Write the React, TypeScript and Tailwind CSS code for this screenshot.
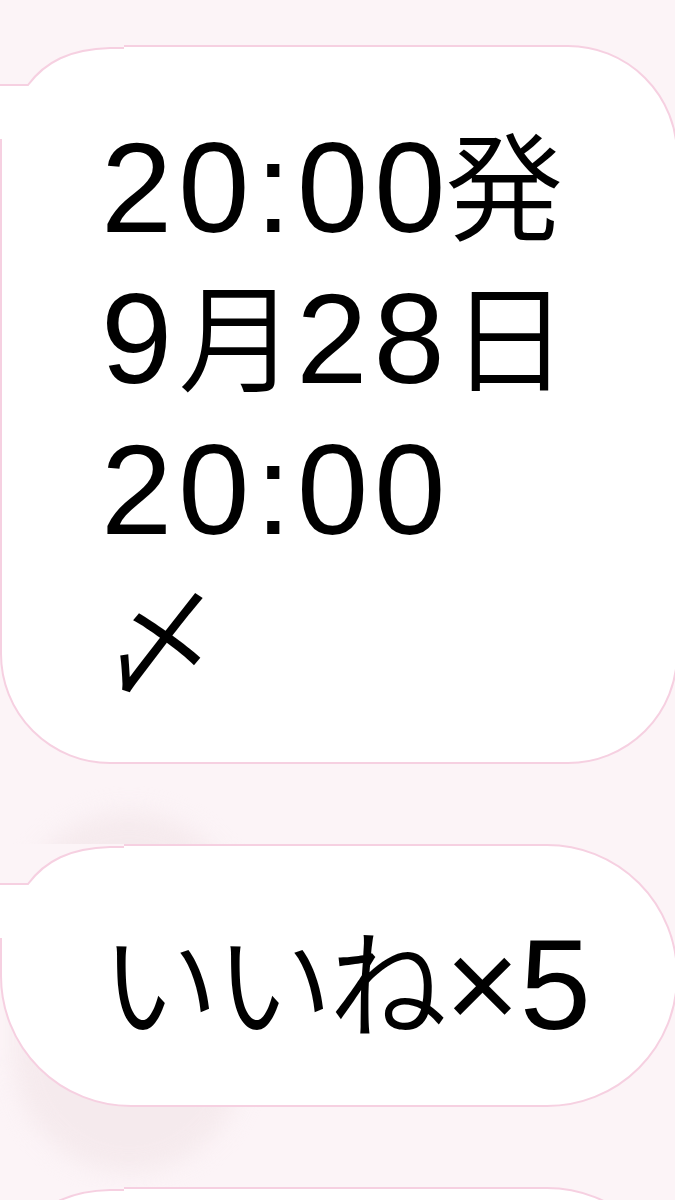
import React from "react";

const BG = "#fcf4f7";
const PINK = "#f6d0e1";

function Tail() {
  return (
    <svg
      className="absolute left-[-2px] top-[-2px]"
      width="124"
      height="96"
      viewBox="0 -2 124 96"
    >
      <path d="M0 38 H28 C45 15 70 2 110 1 V20 H4 V92 H0 Z" fill="#ffffff" />
      <path d="M0 -2 H124 V1 H110 C70 2 45 15 28 38 H0 Z" fill={BG} />
      <path
        d="M0 38 H28 C45 15 70 2 110 1 H124"
        fill="none"
        stroke={PINK}
        strokeWidth="2"
      />
    </svg>
  );
}

function Bubble({ children, className = "" }: { children: React.ReactNode; className?: string }) {
  return (
    <div
      className={
        "relative box-border bg-white border-2 border-[#f6d0e1] rounded-tl-none pl-[99px] mr-[-3px] " +
        className
      }
    >
      <Tail />
      {children}
    </div>
  );
}

function J({ children, className = "" }: { children: React.ReactNode; className?: string }) {
  return (
    <span
      className={"text-[118px] leading-[130px] font-[350] " + className}
      style={{ fontFamily: '"Noto Sans CJK JP", sans-serif' }}
    >
      {children}
    </span>
  );
}

function L({ children }: { children: React.ReactNode }) {
  return <span className="tracking-[6px]">{children}</span>;
}

function Line({ children }: { children: React.ReactNode }) {
  return <div className="h-[151px] leading-[151px] whitespace-nowrap">{children}</div>;
}

export default function App() {
  return (
    <div
      className="relative w-[675px] h-[1200px] overflow-hidden bg-[#fcf4f7] text-black"
      style={{ fontFamily: '"Liberation Sans", Arial, sans-serif' }}
    >
      <div className="absolute left-[14px] top-[812px] w-[230px] h-[360px] rounded-full bg-[#f4e8eb] blur-md opacity-80" />
      <div className="relative flex flex-col gap-[80px] pt-[45px]">
        <Bubble className="h-[719px] pt-[65px] rounded-[110px] rounded-tl-none">
          <div className="text-[128px]">
            <Line>
              <L>20:0</L>
              <span>0</span>
              <J>発</J>
            </Line>
            <Line>
              <L>9</L>
              <J>月</J>
              <L>28</L>
              <J>日</J>
            </Line>
            <Line>
              <L>20:00</L>
            </Line>
            <Line>
              <J>〆</J>
            </Line>
          </div>
        </Bubble>
        <Bubble className="h-[263px] pt-[63px] rounded-[131px] rounded-tl-none">
          <div className="text-[128px]">
            <Line>
              <J className="tracking-[-4px]">いいね</J>
              <span className="ml-[2px]">×</span>
              <span>5</span>
            </Line>
          </div>
        </Bubble>
        <Bubble className="h-[262px] rounded-[131px] rounded-tl-none">
          <div />
        </Bubble>
      </div>
    </div>
  );
}
